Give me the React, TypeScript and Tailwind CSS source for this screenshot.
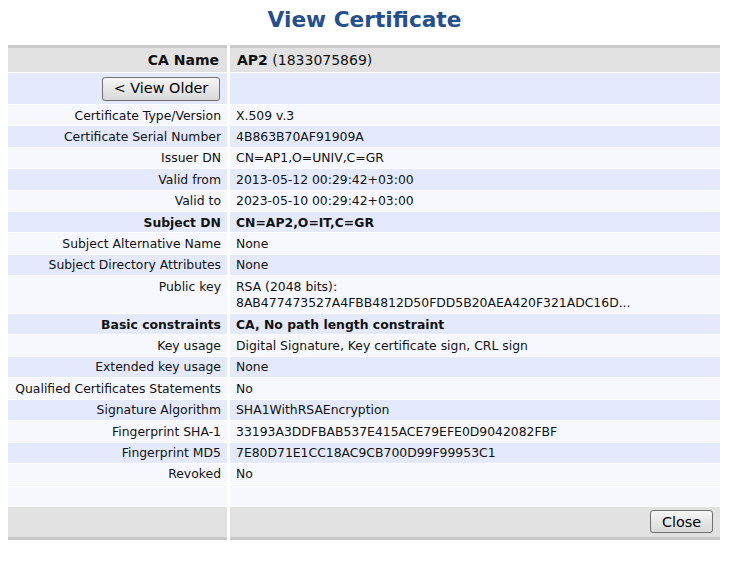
type Row = {
  label: string;
  value: string[];
  bold?: boolean;
};

const ROWS: Row[] = [
  { label: "Certificate Type/Version", value: ["X.509 v.3"] },
  { label: "Certificate Serial Number", value: ["4B863B70AF91909A"] },
  { label: "Issuer DN", value: ["CN=AP1,O=UNIV,C=GR"] },
  { label: "Valid from", value: ["2013-05-12 00:29:42+03:00"] },
  { label: "Valid to", value: ["2023-05-10 00:29:42+03:00"] },
  { label: "Subject DN", value: ["CN=AP2,O=IT,C=GR"], bold: true },
  { label: "Subject Alternative Name", value: ["None"] },
  { label: "Subject Directory Attributes", value: ["None"] },
  {
    label: "Public key",
    value: [
      "RSA (2048 bits):",
      "8AB477473527A4FBB4812D50FDD5B20AEA420F321ADC16D...",
    ],
  },
  {
    label: "Basic constraints",
    value: ["CA, No path length constraint"],
    bold: true,
  },
  {
    label: "Key usage",
    value: ["Digital Signature, Key certificate sign, CRL sign"],
  },
  { label: "Extended key usage", value: ["None"] },
  { label: "Qualified Certificates Statements", value: ["No"] },
  { label: "Signature Algorithm", value: ["SHA1WithRSAEncryption"] },
  {
    label: "Fingerprint SHA-1",
    value: ["33193A3DDFBAB537E415ACE79EFE0D9042082FBF"],
  },
  { label: "Fingerprint MD5", value: ["7E80D71E1CC18AC9CB700D99F99953C1"] },
  { label: "Revoked", value: ["No"] },
];

function Button({ children, className }: { children: string; className: string }) {
  return (
    <button
      type="button"
      className={`rounded-[3px] border border-[#707070] bg-gradient-to-b from-[#f6f6f6] to-[#d9d9d9] text-[14.4px] leading-none text-black ${className}`}
    >
      {children}
    </button>
  );
}

export default function App() {
  return (
    <div className="min-h-[571px] bg-white font-['DejaVu_Sans',sans-serif] text-[#111]">
      <h1 className="h-[45px] pt-[8px] text-center text-[21.7px] font-bold leading-[24px] text-[#25508b]">
        View Certificate
      </h1>

      <div className="ml-2 grid w-[712px] grid-cols-[219px_490px] gap-x-[3px] gap-y-px text-[12.4px] leading-[16.4px]">
        {/* header */}
        <div className="flex h-[27px] items-center justify-end border-t-[3px] border-[#c9c9c9] bg-[#e2e2e2] pr-[8px] text-[14px] font-bold">
          CA Name
        </div>
        <div className="flex h-[27px] items-center border-t-[3px] border-[#c9c9c9] bg-[#e2e2e2] pl-[7px] text-[14px]">
          <span className="font-bold">AP2</span>
          <span>&nbsp;(1833075869)</span>
        </div>

        <div className="flex h-[31px] items-center justify-end bg-[#e4eafc] pr-[7px]">
          <Button className="h-[24px] w-[118px]">&lt; View Older</Button>
        </div>
        <div className="h-[31px] bg-[#e4eafc]" />

        {ROWS.map((row, index) => {
          const bg = index % 2 === 0 ? "bg-[#f7f8fe]" : "bg-[#e4eafc]";
          const weight = row.bold ? "font-bold" : "";
          return (
            <div className="contents" key={row.label}>
              <div className={`${bg} ${weight} pt-[2.5px] pb-[1.5px] pr-[6px] text-right`}>
                {row.label}
              </div>
              <div className={`${bg} ${weight} pt-[2.5px] pb-[1.5px] pl-[6px]`}>
                {row.value.map((line) => (
                  <div key={line}>{line}</div>
                ))}
              </div>
            </div>
          );
        })}

        <div className="h-[20.4px] bg-[#f7f8fe]" />
        <div className="h-[20.4px] bg-[#f7f8fe]" />

        {/* footer */}
        <div className="h-[33px] border-b-[3px] border-[#c9c9c9] bg-[#e2e2e2]" />
        <div className="flex h-[33px] items-center justify-end border-b-[3px] border-[#c9c9c9] bg-[#e2e2e2] pr-[7px]">
          <Button className="h-[23px] w-[63px]">Close</Button>
        </div>
      </div>
    </div>
  );
}
